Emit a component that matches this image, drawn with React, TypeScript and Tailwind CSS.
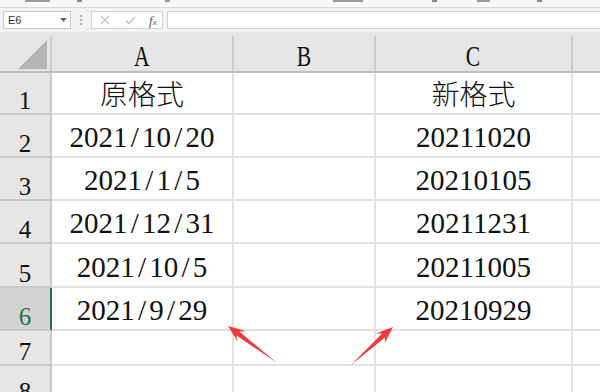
import React from "react";

type Row = { n: string; a?: string; c?: string; h: string; cjk?: boolean; sel?: boolean };

const rows: Row[] = [
  { n: "1", a: "原格式", c: "新格式", h: "h-[42px]", cjk: true },
  { n: "2", a: "2021/10/20", c: "20211020", h: "h-[43px]" },
  { n: "3", a: "2021/1/5", c: "20210105", h: "h-[43px]" },
  { n: "4", a: "2021/12/31", c: "20211231", h: "h-[43px]" },
  { n: "5", a: "2021/10/5", c: "20211005", h: "h-[44px]" },
  { n: "6", a: "2021/9/29", c: "20210929", h: "h-[43px]", sel: true },
  { n: "7", h: "h-[35px]" },
  { n: "8", h: "h-[40px]" },
];

const serif = { fontFamily: '"Liberation Serif", "Noto Sans CJK SC", serif' };
const cjk = { fontFamily: '"Noto Sans CJK SC", "Noto Sans CJK JP", sans-serif' };

function Num({ text }: { text: string }) {
  return (
    <span className="text-[29px] leading-[29px] text-[#111]" style={serif}>
      {text.split("").map((ch, i) =>
        ch === "/" ? (
          <span key={i} className="inline-block w-[14.5px] text-center">
            /
          </span>
        ) : (
          <span key={i}>{ch}</span>
        )
      )}
    </span>
  );
}

function CellText({ text, isCjk }: { text?: string; isCjk?: boolean }) {
  if (!text) return null;
  if (isCjk)
    return (
      <span className="text-[28px] leading-[28px] font-light text-[#111] pb-[6px]" style={cjk}>
        {text}
      </span>
    );
  return (
    <span className="pb-[3px]">
      <Num text={text} />
    </span>
  );
}

function arrow(tx: number, ty: number, hx: number, hy: number) {
  const dx = hx - tx;
  const dy = hy - ty;
  const L = Math.hypot(dx, dy);
  const ux = dx / L;
  const uy = dy / L;
  const nx = -uy;
  const ny = ux;
  const head = 17;
  const notch = 12.5;
  const hw = 6.5;
  const sw = 2.4;
  const bx = hx - ux * head;
  const by = hy - uy * head;
  const sx = hx - ux * notch;
  const sy = hy - uy * notch;
  const pts = [
    [tx, ty],
    [sx + nx * sw, sy + ny * sw],
    [bx + nx * hw, by + ny * hw],
    [hx, hy],
    [bx - nx * hw, by - ny * hw],
    [sx - nx * sw, sy - ny * sw],
  ];
  return pts.map((p) => `${p[0].toFixed(1)},${p[1].toFixed(1)}`).join(" ");
}

export default function App() {
  return (
    <div className="relative w-[600px] h-[392px] overflow-hidden bg-white">
      {/* ribbon bottom */}
      <div className="h-[8px] bg-[#f7f7f7] border-b border-[#d8d8d8] flex items-start overflow-hidden">
        <div className="ml-[25px] w-[25px] h-[2px] bg-[#9a9a9a]" />
        <div className="ml-[27px] w-[5px] h-[2px] bg-[#8a8a8a]" />
        <div className="ml-[83px] w-[5px] h-[2px] bg-[#9a9a9a]" />
        <div className="ml-[163px] w-[30px] h-[2px] bg-[#9a9a9a]" />
        <div className="ml-[69px] w-[5px] h-[2px] bg-[#8a8a8a]" />
        <div className="ml-[40px] w-[13px] h-[2px] bg-[#9a9a9a]" />
        <div className="ml-[47px] w-[5px] h-[2px] bg-[#8a8a8a]" />
      </div>
      {/* formula bar */}
      <div className="h-[24px] bg-[#f3f3f3] flex items-start pt-[3px]">
        <div className="ml-[3px] w-[68px] h-[18px] bg-white border border-[#c9c9c9] flex items-center justify-between pl-[4px] pr-[3px]">
          <span className="text-[11px] leading-none text-[#333]" style={{ fontFamily: '"Liberation Sans", sans-serif' }}>
            E6
          </span>
          <svg width="7" height="4" viewBox="0 0 7 4">
            <path d="M0 0 L7 0 L3.5 4 Z" fill="#6a6a6a" />
          </svg>
        </div>
        <div className="w-[20px] h-[18px] flex flex-col items-center justify-center gap-[2px]">
          <div className="w-[2px] h-[2px] bg-[#b5b5b5]" />
          <div className="w-[2px] h-[2px] bg-[#b5b5b5]" />
          <div className="w-[2px] h-[2px] bg-[#b5b5b5]" />
        </div>
        <div className="w-[72px] h-[18px] bg-white border border-[#d2d2d2] flex items-center">
          <svg className="ml-[8px]" width="10" height="10" viewBox="0 0 10 10">
            <path d="M1 1 L9 9 M9 1 L1 9" stroke="#c2c2c2" strokeWidth="1.2" />
          </svg>
          <svg className="ml-[15px]" width="11" height="9" viewBox="0 0 11 9">
            <path d="M1 4.5 L4 7.5 L10 1" stroke="#c2c2c2" strokeWidth="1.3" fill="none" />
          </svg>
          <span
            className="ml-[13px] text-[12px] leading-none italic text-[#555]"
            style={serif}
          >
            <span className="text-[13px]">f</span>
            <span className="text-[9px]">x</span>
          </span>
        </div>
        <div className="ml-[4px] flex-1 h-[18px] bg-white border border-[#d2d2d2] border-r-0" />
      </div>
      {/* column header */}
      <div className="h-[41px] bg-[#e6e6e6] border-b-2 border-[#bebebe] flex pt-[4px]">
        <div className="w-[52px] h-full border-r-2 border-[#cbcbcb] flex items-end justify-end">
          <svg width="32" height="31" viewBox="0 0 32 31" className="mb-[1px] mr-[1px]">
            <path d="M1 30 L30 30 L30 1 Z" fill="#b5b5b5" />
          </svg>
        </div>
        {[
          { l: "A", w: "w-[182px]" },
          { l: "B", w: "w-[142px]" },
          { l: "C", w: "w-[197px]" },
        ].map((c) => (
          <div key={c.l} className={`${c.w} h-full border-r-2 border-[#cbcbcb] flex items-end justify-center`}>
            <span className="inline-block text-[30px] leading-[30px] text-[#111] scale-x-[0.72]" style={serif}>
              {c.l}
            </span>
          </div>
        ))}
        <div className="flex-1 h-full" />
      </div>
      {/* rows */}
      {rows.map((r) => (
        <div key={r.n} className={`${r.h} flex`}>
          <div
            className={
              r.sel
                ? "w-[52px] h-full bg-[#d3d3d3] border-r-2 border-r-[#217346] border-b-2 border-b-[#c9c9c9] flex items-end justify-center"
                : "w-[52px] h-full bg-[#e6e6e6] border-r-2 border-b-2 border-[#cacaca] flex items-end justify-center"
            }
          >
            <span
              className={
                r.sel
                  ? "text-[25px] leading-[25px] text-[#217346]"
                  : "text-[25px] leading-[25px] text-[#111]"
              }
              style={serif}
            >
              {r.n}
            </span>
          </div>
          <div className="w-[182px] h-full border-r-2 border-b-2 border-[#e2e2e2] flex items-end justify-center">
            <CellText text={r.a} isCjk={r.cjk} />
          </div>
          <div className="w-[142px] h-full border-r-2 border-b-2 border-[#e2e2e2]" />
          <div className="w-[197px] h-full border-r-2 border-b-2 border-[#e2e2e2] flex items-end justify-center">
            <CellText text={r.c} isCjk={r.cjk} />
          </div>
          <div className="flex-1 h-full border-b-2 border-[#e2e2e2]" />
        </div>
      ))}
      {/* annotation arrows */}
      <svg className="absolute inset-0 pointer-events-none" width="600" height="392" viewBox="0 0 600 392">
        <polygon points={arrow(277, 363, 228, 326)} fill="#f03c3c" />
        <polygon points={arrow(351, 365, 393, 327)} fill="#f03c3c" />
      </svg>
    </div>
  );
}
